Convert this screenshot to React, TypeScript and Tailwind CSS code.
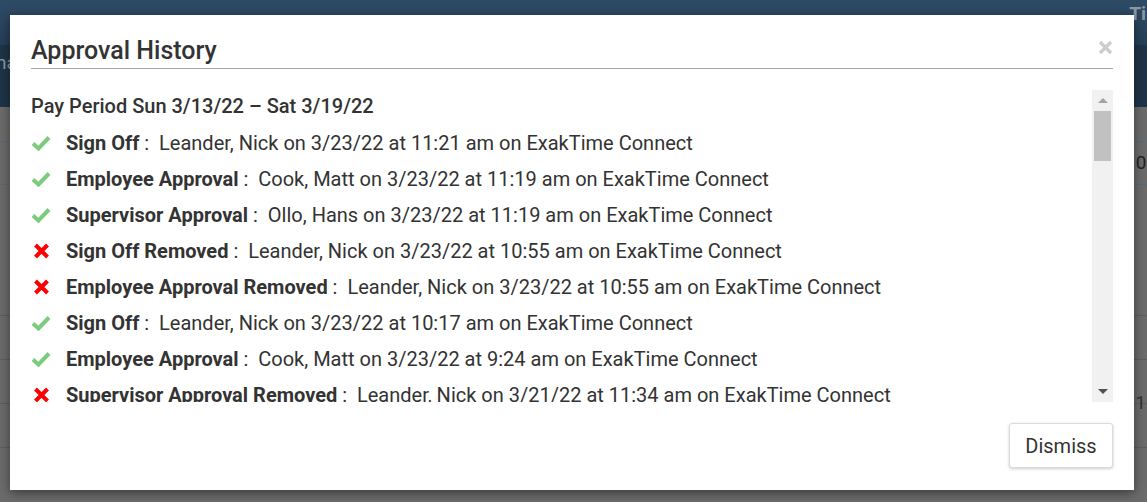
type Entry = { ok: boolean; label: string; who: string; when: string };

const entries: Entry[] = [
  { ok: true, label: 'Sign Off', who: 'Leander, Nick', when: '3/23/22 at 11:21 am' },
  { ok: true, label: 'Employee Approval', who: 'Cook, Matt', when: '3/23/22 at 11:19 am' },
  { ok: true, label: 'Supervisor Approval', who: 'Ollo, Hans', when: '3/23/22 at 11:19 am' },
  { ok: false, label: 'Sign Off Removed', who: 'Leander, Nick', when: '3/23/22 at 10:55 am' },
  { ok: false, label: 'Employee Approval Removed', who: 'Leander, Nick', when: '3/23/22 at 10:55 am' },
  { ok: true, label: 'Sign Off', who: 'Leander, Nick', when: '3/23/22 at 10:17 am' },
  { ok: true, label: 'Employee Approval', who: 'Cook, Matt', when: '3/23/22 at 9:24 am' },
  { ok: false, label: 'Supervisor Approval Removed', who: 'Leander, Nick', when: '3/21/22 at 11:34 am' },
  { ok: true, label: 'Supervisor Approval', who: 'Ollo, Hans', when: '3/21/22 at 11:02 am' },
];

function CheckIcon() {
  return (
    <svg width="20" height="16" viewBox="0 0 20 16">
      <path d="M2 8.5 L7.5 13.5 L18 2.5" fill="none" stroke="#7dcb7f" strokeWidth="4" />
    </svg>
  );
}

function CrossIcon() {
  return (
    <svg width="17" height="16" viewBox="0 0 17 16" className="ml-[2px]">
      <path d="M2.5 2 L14.5 14 M14.5 2 L2.5 14" fill="none" stroke="#ff0000" strokeWidth="4" />
    </svg>
  );
}

function Backdrop() {
  return (
    <div className="absolute inset-0 flex flex-col bg-[#6b6b6b]">
      <div className="h-[45px] bg-gradient-to-b from-[#2e4b66] to-[#253f57] flex justify-end items-start">
        <span className="text-[19px] font-bold text-[#8c98a3] leading-none mt-[4px] mr-[-6px]">Tir</span>
      </div>
      <div className="h-[62px] bg-[#1f3448] flex items-center">
        <span className="text-[19px] text-[#8e99a3] ml-[-4px] mt-[-26px]">na</span>
      </div>
      <div className="flex-1 flex flex-col">
        <div className="h-[34px]" />
        <div className="h-[44px] border-y border-[#56697a] flex justify-end items-center">
          <span className="text-[19px] text-[#222] mr-[-4px]">0:</span>
        </div>
        <div className="h-[131px] border-b border-[#5e5e5e]" />
        <div className="h-[44px] border-b border-[#5e5e5e]" />
        <div className="h-[44px] border-b border-[#5e5e5e] flex justify-end items-center">
          <span className="text-[19px] text-[#333] mr-[1px] mt-[44px]">1</span>
        </div>
        <div className="h-[44px] border-b border-[#5e5e5e]" />
      </div>
    </div>
  );
}

export default function App() {
  return (
    <div className="relative w-[1147px] h-[502px] overflow-hidden font-['Roboto',sans-serif]">
      <Backdrop />

      <div className="absolute left-[10px] top-[15px] w-[1124px] h-[475px] bg-white shadow-[0_3px_10px_rgba(0,0,0,0.45)] flex flex-col px-[21px]">
        <div className="relative pt-[21px] pb-[2px] border-b border-[#a6a6a6]">
          <h2 className="text-[25px] font-medium text-[#333] leading-[30px]">Approval History</h2>
          <svg className="absolute right-[0px] top-[25px]" width="15" height="15" viewBox="0 0 15 15">
            <path d="M2 2 L13 13 M13 2 L2 13" stroke="#cccccc" strokeWidth="3.2" />
          </svg>
        </div>

        <div className="mt-[21px] h-[312px] flex">
          <div className="flex-1 overflow-hidden text-[#333] pt-[1px]">
            <div className="h-[30px] leading-[30px] text-[20px] font-medium mb-[4px]">
              Pay Period Sun 3/13/22 – Sat 3/19/22
            </div>
            {entries.map((e, i) => (
              <div key={i} className="h-[36px] flex items-center text-[20px] whitespace-nowrap">
                <span className="w-[35px] flex items-center">
                  {e.ok ? <CheckIcon /> : <CrossIcon />}
                </span>
                <span className="font-bold">{e.label}</span>
                <span>&nbsp;:&nbsp;&nbsp;{e.who} on {e.when} on ExakTime Connect</span>
              </div>
            ))}
          </div>
          <div className="w-[21px] bg-[#f1f1f1] flex flex-col items-center">
            <div className="h-[21px] flex items-center justify-center">
              <div className="w-0 h-0 border-x-[5px] border-x-transparent border-b-[5px] border-b-[#a3a3a3]" />
            </div>
            <div className="w-[17px] h-[50px] bg-[#c1c1c1]" />
            <div className="flex-1" />
            <div className="h-[21px] flex items-center justify-center">
              <div className="w-0 h-0 border-x-[5px] border-x-transparent border-t-[5px] border-t-[#505050]" />
            </div>
          </div>
        </div>

        <div className="flex justify-end mt-[21px]">
          <button className="w-[104px] h-[45px] bg-white border border-[#dcdcdc] rounded-[3px] shadow-[0_1px_3px_rgba(0,0,0,0.2)] text-[20px] text-[#333]">
            Dismiss
          </button>
        </div>
      </div>
    </div>
  );
}
